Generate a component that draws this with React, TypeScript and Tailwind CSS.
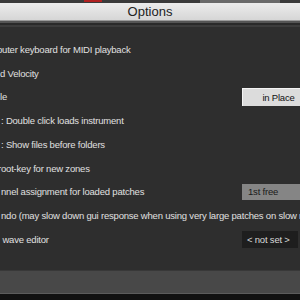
import React from 'react';

type Row = {
  text: string;
  indent: number;
  control?: 'light' | 'gray' | 'dark';
  value?: string;
};

const ROWS: Row[] = [
  { text: 'puter keyboard for MIDI playback', indent: -3 },
  { text: 'd Velocity', indent: 0 },
  { text: 'le', indent: 0, control: 'light', value: 'in Place' },
  { text: ': Double click loads instrument', indent: 1 },
  { text: ': Show files before folders', indent: 1 },
  { text: 'root-key for new zones', indent: -2 },
  { text: 'nnel assignment for loaded patches', indent: 1, control: 'gray', value: '1st free' },
  { text: 'ndo (may slow down gui response when using very large patches on slow machines)', indent: 1 },
  { text: ' wave editor', indent: 0, control: 'dark', value: '< not set >' },
];

function Control({ kind, value }: { kind: 'light' | 'gray' | 'dark'; value: string }) {
  if (kind === 'light') {
    return (
      <div className="h-[18px] w-[72px] flex items-center justify-center bg-[#dcdcdc] border-t border-l border-[#f4f4f4] text-[#111]">
        {value}
      </div>
    );
  }
  if (kind === 'gray') {
    return (
      <div className="h-[16px] w-[72px] flex items-center pl-[6px] bg-[#858585] text-[#1a1a1a]">
        {value}
      </div>
    );
  }
  return (
    <div className="h-[17px] w-[56px] flex items-center pl-[5px] bg-[#1e1e1e] text-[#d8d8d8]">
      {value}
    </div>
  );
}

export default function App() {
  return (
    <div className="w-[300px] h-[300px] overflow-hidden flex flex-col bg-[#2e2e2e]" style={{ fontFamily: '"Liberation Sans", sans-serif' }}>
      {/* strip of the window behind */}
      <div className="h-[3px] bg-[#3a3a3a] relative shrink-0">
        <div className="absolute left-[84px] top-0 h-[2px] w-[18px] bg-[#b02020]" />
        <div className="absolute left-[200px] top-0 h-[3px] w-[80px] bg-[#6a6a6a]" />
      </div>

      <div className="h-[18px] shrink-0 flex items-center justify-center bg-gradient-to-b from-[#ececec] to-[#d6d6d6] border-b border-[#9a9a9a]">
        <span className="text-[13px] text-[#222]">Options</span>
      </div>
      <div className="h-[2px] shrink-0 bg-[#555]" />
      <div className="h-[2px] shrink-0 bg-[#2a2a2a]" />
      <div className="h-[2px] shrink-0 bg-[#3c3c3c]" />

      <div className="flex-1 flex flex-col pt-[11px] text-[9.5px] tracking-[-0.2px] text-[#e0e0e0] whitespace-nowrap">
        {ROWS.map((r, i) => (
          <div key={i} className="h-[23.75px] shrink-0 flex items-center relative">
            <span className="whitespace-pre" style={{ marginLeft: r.indent }}>{r.text}</span>
            {r.control && r.value && (
              <div className="absolute left-[242px] top-0 bottom-0 flex items-center">
                <Control kind={r.control} value={r.value} />
              </div>
            )}
          </div>
        ))}
      </div>

      <div className="h-px shrink-0 bg-[#383838]" />
      <div className="h-[23px] shrink-0 bg-[#484848] border-b border-[#5c5c5c]" />
      <div className="h-[6px] shrink-0 bg-[#111]" />
    </div>
  );
}
